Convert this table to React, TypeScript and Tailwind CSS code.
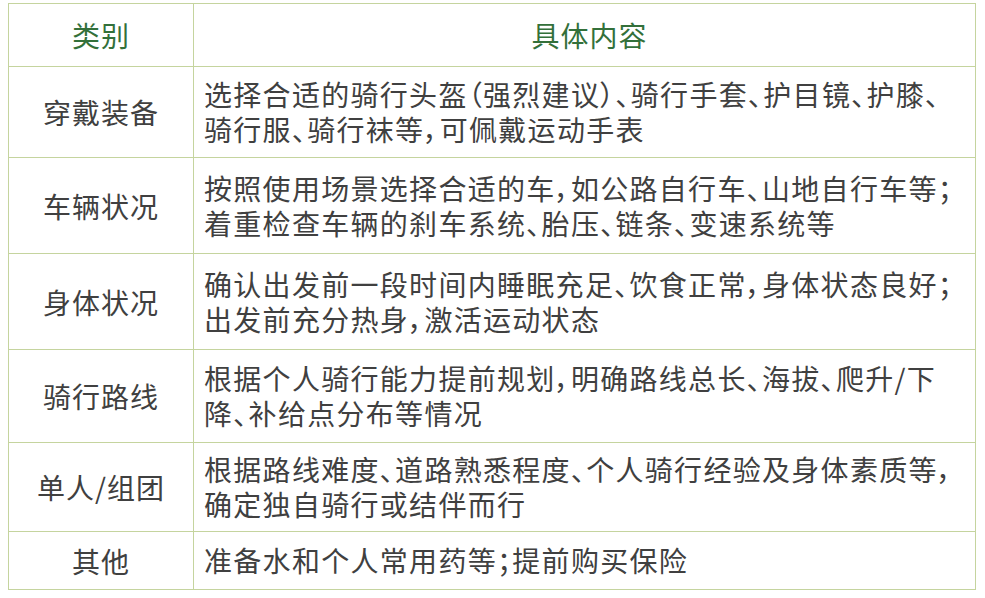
import React from 'react';

interface Row {
  category: string;
  lines: string[];
  height: string;
}

const rows: Row[] = [
  {
    category: '穿戴装备',
    lines: ['选择合适的骑行头盔（强烈建议）、骑行手套、护目镜、护膝、', '骑行服、骑行袜等，可佩戴运动手表'],
    height: 'h-[91px]',
  },
  {
    category: '车辆状况',
    lines: ['按照使用场景选择合适的车，如公路自行车、山地自行车等；', '着重检查车辆的刹车系统、胎压、链条、变速系统等'],
    height: 'h-[96px]',
  },
  {
    category: '身体状况',
    lines: ['确认出发前一段时间内睡眠充足、饮食正常，身体状态良好；', '出发前充分热身，激活运动状态'],
    height: 'h-[96px]',
  },
  {
    category: '骑行路线',
    lines: ['根据个人骑行能力提前规划，明确路线总长、海拔、爬升/下', '降、补给点分布等情况'],
    height: 'h-[93px]',
  },
  {
    category: '单人/组团',
    lines: ['根据路线难度、道路熟悉程度、个人骑行经验及身体素质等，', '确定独自骑行或结伴而行'],
    height: 'h-[89px]',
  },
  {
    category: '其他',
    lines: ['准备水和个人常用药等；提前购买保险'],
    height: 'h-[57px]',
  },
];

export default function App(): JSX.Element {
  return (
    <div className="w-[985px] h-[598px] bg-white pt-[3px] pl-[8px] font-['Noto_Sans_CJK_SC',sans-serif]">
      <div className="w-[968px] border border-[#c5d49e] [font-feature-settings:'palt']">
        {/* Header */}
        <div className="flex h-[63px] border-b border-[#c5d49e] text-[28px] text-[#33703a] tracking-[1px]">
          <div className="w-[185px] flex items-center justify-center border-r border-[#c5d49e]">类别</div>
          <div className="flex-1 flex items-center justify-center pl-[10px]">具体内容</div>
        </div>

        {/* Body rows */}
        {rows.map((row, i) => (
          <div
            key={row.category}
            className={`flex ${row.height} text-[#404040] ${i < rows.length - 1 ? 'border-b border-[#c5d49e]' : ''}`}
          >
            <div className="w-[185px] flex items-center justify-center border-r border-[#c5d49e] text-[28px] tracking-[1px]">
              {row.category}
            </div>
            <div className="flex-1 flex flex-col justify-center pl-[10px] text-[28px] leading-[35px] tracking-[1.3px] whitespace-nowrap">
              {row.lines.map((line) => (
                <div key={line}>{line}</div>
              ))}
            </div>
          </div>
        ))}
      </div>
    </div>
  );
}
